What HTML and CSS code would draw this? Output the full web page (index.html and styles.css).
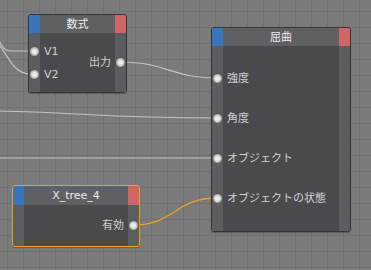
FILE: index.html
```html
<!DOCTYPE html>
<html lang="ja">
<head>
<meta charset="utf-8">
<link rel="stylesheet" href="styles.css">
</head>
<body>
<div class="canvas">
  <svg class="wires" width="371" height="270" viewBox="0 0 371 270">
    <path class="wire" d="M -10 34 C 0 34, 0 51, 10 51 L 34 51"/>
    <path class="wire" d="M -10 40 C 5 40, 8 74, 30 74 L 34 74"/>
    <path class="wire" d="M 120 62 C 168 62, 170 78, 217 78"/>
    <path class="wire" d="M -80 110 C 80 110, 80 118, 217 118"/>
    <path class="wire" d="M -10 158 L 217 158"/>
    <path class="wire active" d="M 133 225 C 175 225, 175 198, 217 198"/>
  </svg>

  <div class="node node-formula">
    <div class="node-head"><span class="title">数式</span></div>
    <div class="node-body split">
      <div class="ports inputs">
        <div class="port"><span class="dot"></span><span class="label">V1</span></div>
        <div class="port"><span class="dot"></span><span class="label">V2</span></div>
      </div>
      <div class="ports outputs">
        <div class="port out"><span class="label">出力</span><span class="dot"></span></div>
      </div>
    </div>
  </div>

  <div class="node node-bend">
    <div class="node-head"><span class="title">屈曲</span></div>
    <div class="node-body list">
      <div class="port row"><span class="dot"></span><span class="label">強度</span></div>
      <div class="port row"><span class="dot"></span><span class="label">角度</span></div>
      <div class="port row"><span class="dot"></span><span class="label">オブジェクト</span></div>
      <div class="port row"><span class="dot"></span><span class="label">オブジェクトの状態</span></div>
    </div>
  </div>

  <div class="node node-tree selected">
    <div class="node-head"><span class="title">X_tree_4</span></div>
    <div class="node-body split">
      <div class="ports inputs"></div>
      <div class="ports outputs">
        <div class="port out"><span class="label">有効</span><span class="dot"></span></div>
      </div>
    </div>
  </div>
</div>
</body>
</html>
```

FILE: styles.css
```css
* { box-sizing: border-box; }
html, body { margin: 0; padding: 0; }
body {
  width: 371px;
  height: 270px;
  overflow: hidden;
  font-family: "DejaVu Sans", "Noto Sans CJK JP", sans-serif;
  font-size: 11px;
}
.canvas {
  position: relative;
  width: 371px;
  height: 270px;
  background-color: #7b7b7b;
  background-image:
    linear-gradient(to right, #707070 1px, transparent 1px),
    linear-gradient(to bottom, #707070 1px, transparent 1px);
  background-size: 16px 16px;
  background-position: 7px 11px;
}
.wires {
  position: absolute;
  left: 0;
  top: 0;
}
.wire {
  fill: none;
  stroke: #c4c4c4;
  stroke-width: 1.2;
}
.wire.active {
  stroke: #eda224;
  stroke-width: 1.3;
}
.node {
  position: absolute;
  display: flex;
  flex-direction: column;
  border: 1px solid #343434;
  border-radius: 3px;
  overflow: hidden;
  box-shadow: 0 1px 1px rgba(0,0,0,0.25);
}
.node.selected {
  border-color: #eea21f;
}
.node-formula { left: 28px; top: 14px; width: 99px; height: 79px; }
.node-bend { left: 211px; top: 27px; width: 140px; height: 205px; }
.node-tree { left: 12px; top: 185px; width: 128px; height: 62px; }

.node-head {
  height: 18px;
  flex: none;
  display: flex;
  align-items: center;
  justify-content: center;
  background: linear-gradient(90deg, #3a74bb 0 11px, #5f6062 11px calc(100% - 11px), #d06567 calc(100% - 11px));
}
.node-tree .node-head { height: 19px; }
.title {
  color: #ececec;
  line-height: 1;
}
.node-body {
  flex: 1;
  background: linear-gradient(90deg, #5c5d5f 0 11px, #4a4a4c 11px calc(100% - 11px), #5c5d5f calc(100% - 11px));
}
.node-body.split {
  display: flex;
  justify-content: space-between;
  align-items: center;
}
.ports {
  display: flex;
  flex-direction: column;
  gap: 11px;
}
.port {
  display: flex;
  align-items: center;
  height: 12px;
  gap: 4px;
}
.port .dot {
  flex: none;
  width: 9px;
  height: 9px;
  margin: 0 1px;
  border-radius: 50%;
  background: radial-gradient(circle at 50% 50%, #ececec 0 2px, #c9c9c9 3px, #a9a9a9 4.5px);
  box-shadow: 0 0 0 0.5px rgba(60,60,60,0.6);
}
.label {
  color: #cdd0d4;
  line-height: 1;
  white-space: nowrap;
}
.node-body.list {
  display: flex;
  flex-direction: column;
  padding-top: 12px;
}
.port.row {
  height: 40px;
}
```
